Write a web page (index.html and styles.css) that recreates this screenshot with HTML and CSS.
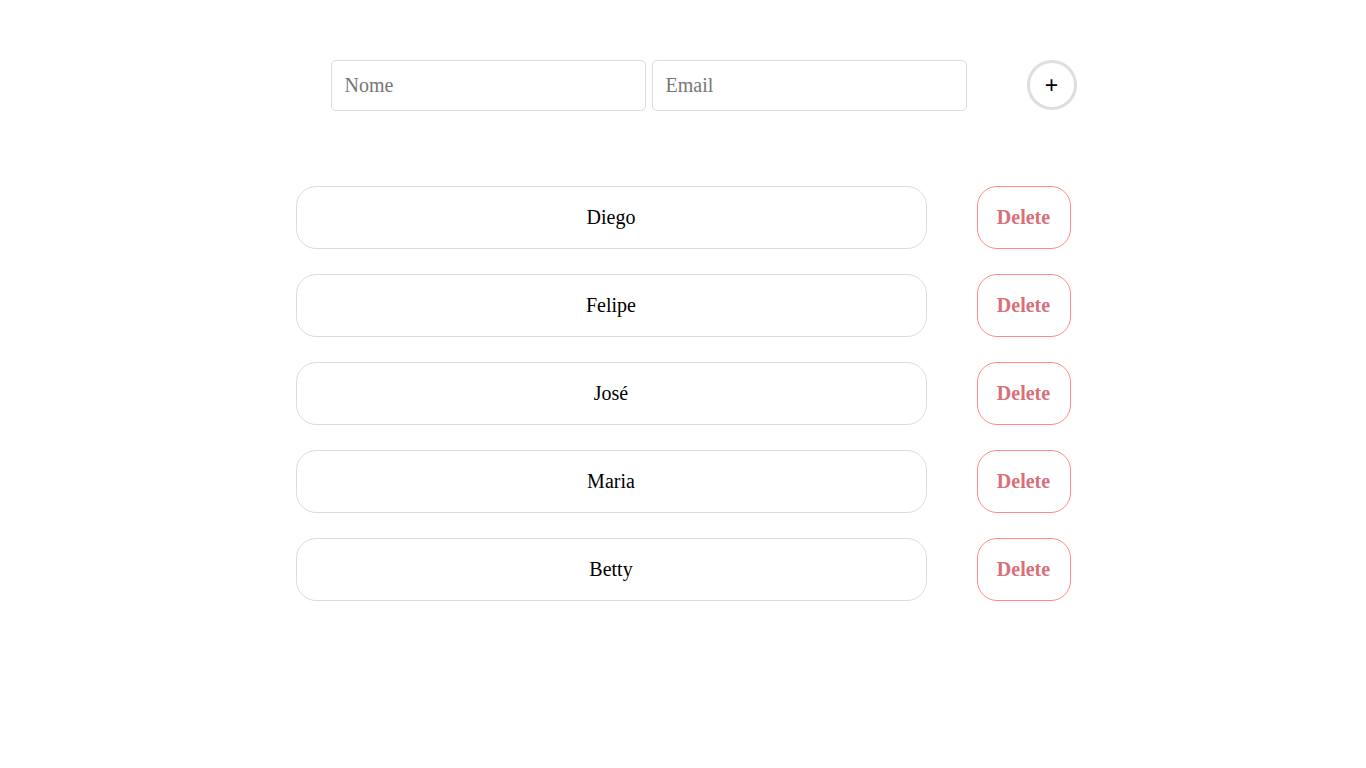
FILE: index.html
```html
<!DOCTYPE html>
<html>
<head>
<meta charset="utf-8">
<link rel="stylesheet" href="styles.css">
</head>
<body>
<div class="wrap">
  <form class="form">
    <input class="field" type="text" placeholder="Nome">
    <input class="field" type="text" placeholder="Email">
    <button class="add" type="button">+</button>
  </form>
  <ul class="list">
    <li class="row"><div class="name">Diego</div><button class="del" type="button">Delete</button></li>
    <li class="row"><div class="name">Felipe</div><button class="del" type="button">Delete</button></li>
    <li class="row"><div class="name">José</div><button class="del" type="button">Delete</button></li>
    <li class="row"><div class="name">Maria</div><button class="del" type="button">Delete</button></li>
    <li class="row"><div class="name">Betty</div><button class="del" type="button">Delete</button></li>
  </ul>
</div>
</body>
</html>
```
FILE: styles.css
```css
html, body {
  margin: 0;
  padding: 0;
  background: #fff;
  font-family: "Liberation Serif", "Times New Roman", serif;
}
.wrap {
  width: 775px;
  margin: 0 auto;
  padding-top: 60px;
}
.form {
  display: flex;
  align-items: flex-start;
  margin: 0 0 0 35px;
  width: 800px;
}
.field {
  box-sizing: border-box;
  flex: 0 0 315px;
  width: 315px;
  height: 51px;
  margin: 0 6px 0 0;
  padding: 0 13px;
  border: 1px solid #dcdcdc;
  border-radius: 5px;
  font-family: "Liberation Serif", serif;
  font-size: 20px;
  color: #000;
  outline: none;
}
.field::placeholder {
  color: #777;
}
.add {
  box-sizing: border-box;
  flex: 0 0 50px;
  width: 50px;
  height: 50px;
  margin: 0 0 0 54px;
  border: 3px solid #dedede;
  border-radius: 50%;
  background: #fff;
  font-family: "Liberation Sans", Arial, sans-serif;
  font-size: 23px;
  line-height: 1;
  color: #000;
  padding: 0;
  display: flex;
  align-items: center;
  justify-content: center;
}
.list {
  list-style: none;
  margin: 75px 0 0 0;
  padding: 0;
  display: flex;
  flex-direction: column;
  gap: 25px;
}
.row {
  display: flex;
  gap: 50px;
}
.name {
  box-sizing: border-box;
  width: 631px;
  height: 63px;
  border: 1px solid #dcdcdc;
  border-radius: 20px;
  display: flex;
  align-items: center;
  justify-content: center;
  font-size: 20px;
  color: #000;
}
.del {
  box-sizing: border-box;
  width: 94px;
  height: 63px;
  border: 1px solid #ff8888;
  border-radius: 20px;
  background: #fff;
  font-family: "Liberation Serif", serif;
  font-weight: bold;
  font-size: 20px;
  color: #d97079;
  padding: 0;
}
```
